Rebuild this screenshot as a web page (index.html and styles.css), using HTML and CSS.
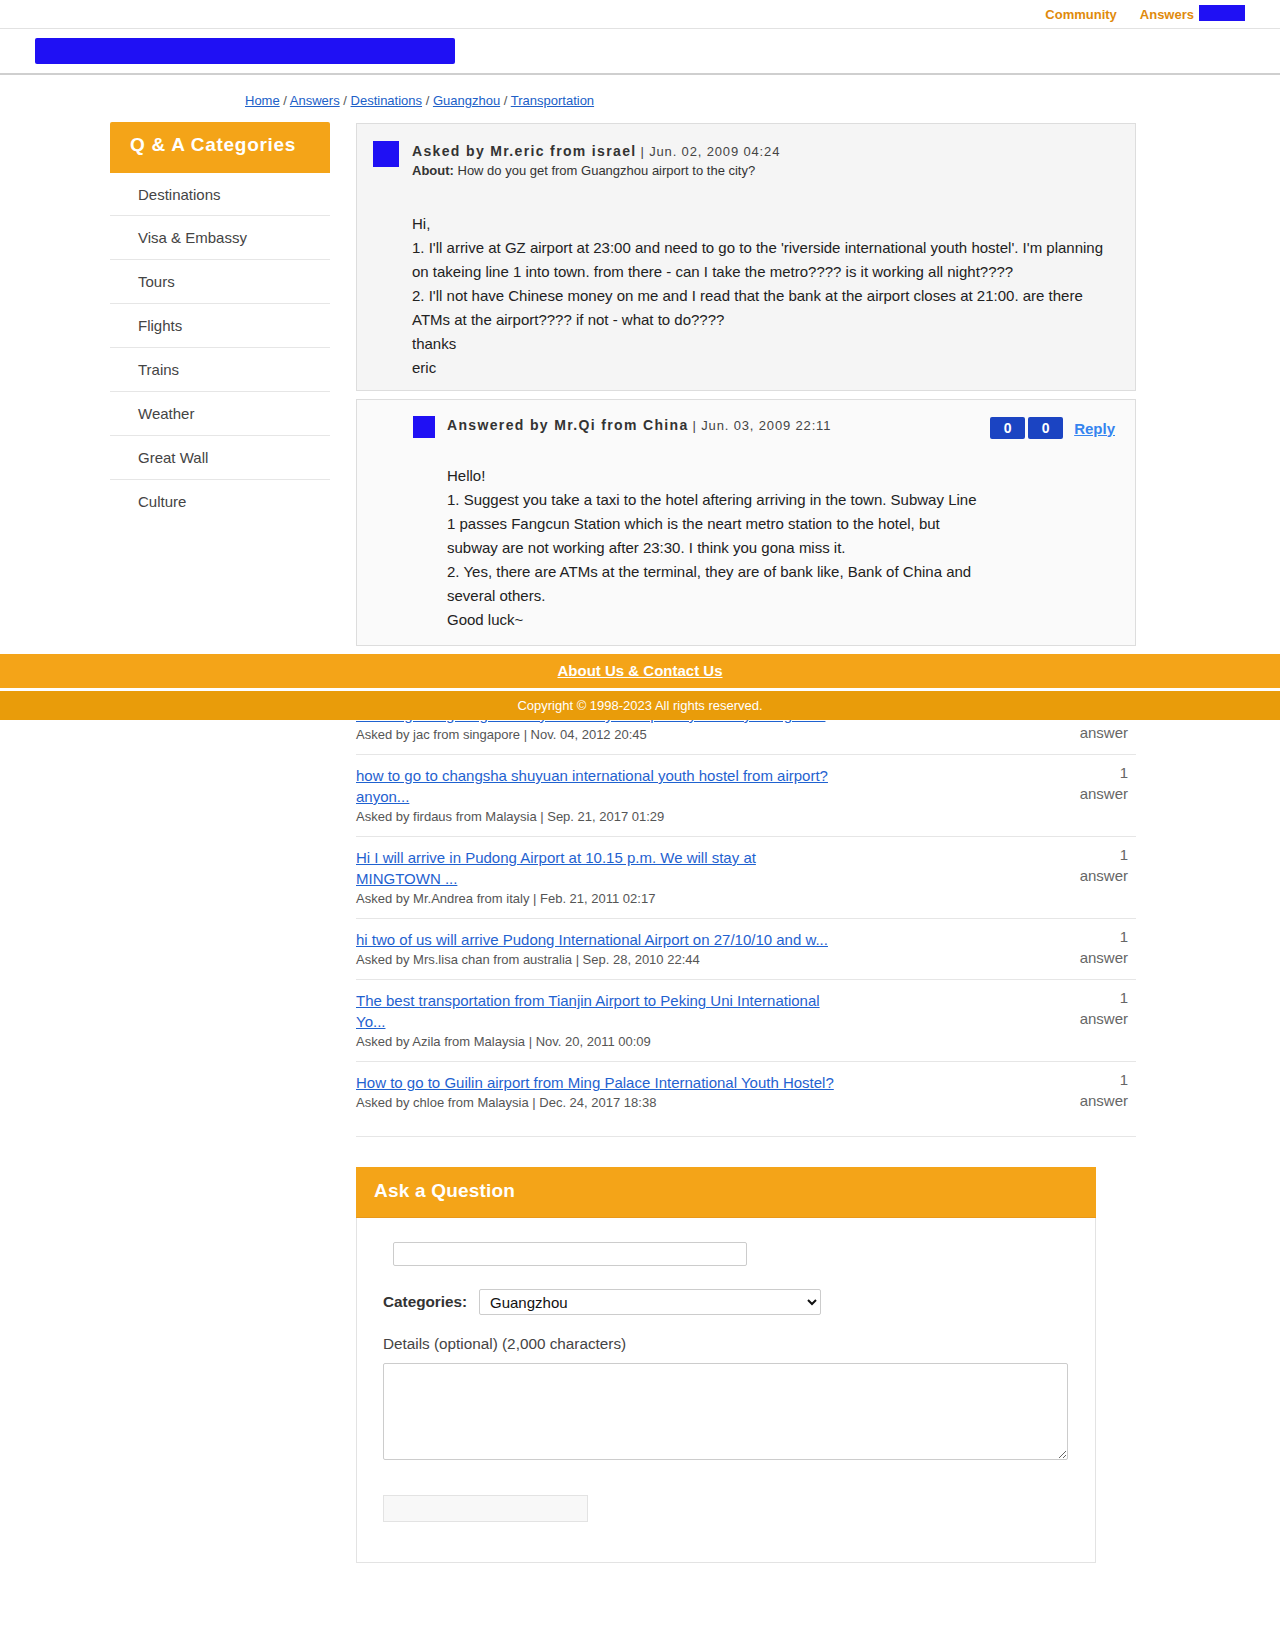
FILE: index.html
```html
<!DOCTYPE html>
<html lang="en">
<head>
<meta charset="utf-8">
<title>How do you get from Guangzhou airport to the city?</title>
<link rel="stylesheet" href="styles.css">
</head>
<body>
<div class="topbar">
  <a class="top-link" href="#">Community</a>
  <a class="top-link answers" href="#">Answers</a>
  <span class="top-box"></span>
</div>
<div class="header">
  <div class="logo"></div>
</div>
<div class="breadcrumb">
  <a href="#">Home</a> / <a href="#">Answers</a> / <a href="#">Destinations</a> / <a href="#">Guangzhou</a> / <a href="#">Transportation</a>
</div>
<div class="main">
  <aside class="sidebar">
    <div class="side-title">Q &amp; A Categories</div>
    <ul class="side-list">
      <li>Destinations</li>
      <li>Visa &amp; Embassy</li>
      <li>Tours</li>
      <li>Flights</li>
      <li>Trains</li>
      <li>Weather</li>
      <li>Great Wall</li>
      <li class="last">Culture</li>
    </ul>
  </aside>
  <div class="content">
    <div class="question">
      <div class="avatar"></div>
      <div class="q-main">
        <div class="q-title"><b>Asked by Mr.eric from israel</b> <span class="date">| Jun. 02, 2009 04:24</span></div>
        <div class="q-about"><b>About:</b> How do you get from Guangzhou airport to the city?</div>
        <div class="q-body">Hi,<br>1. I'll arrive at GZ airport at 23:00 and need to go to the 'riverside international youth hostel'. I'm planning on takeing line 1 into town. from there - can I take the metro???? is it working all night????<br>2. I'll not have Chinese money on me and I read that the bank at the airport closes at 21:00. are there ATMs at the airport???? if not - what to do????<br>thanks<br>eric</div>
      </div>
    </div>
    <div class="answer">
      <div class="a-head">
        <div class="a-who">
          <div class="avatar small"></div>
          <div class="q-title"><b>Answered by Mr.Qi from China</b> <span class="date">| Jun. 03, 2009 22:11</span></div>
        </div>
        <div class="a-actions">
          <span class="vote">0</span>
          <span class="vote">0</span>
          <a class="reply" href="#">Reply</a>
        </div>
      </div>
      <div class="a-body">Hello!<br>1. Suggest you take a taxi to the hotel aftering arriving in the town. Subway Line 1 passes Fangcun Station which is the neart metro station to the hotel, but subway are not working after 23:30. I think you gona miss it.<br>2. Yes, there are ATMs at the terminal, they are of bank like, Bank of China and several others.<br>Good luck~</div>
    </div>

    <ul class="qlist">
      <li class="qitem">
        <div class="qi-main">
          <a href="#">how to get to guangzhou city from baiyun airport by subway at night?...</a>
          <div class="qi-meta">Asked by jac from singapore | Nov. 04, 2012 20:45</div>
        </div>
        <div class="qi-count">1<br>answer</div>
      </li>
      <li class="qitem">
        <div class="qi-main">
          <a href="#">how to go to changsha shuyuan international youth hostel from airport? anyon...</a>
          <div class="qi-meta">Asked by firdaus from Malaysia | Sep. 21, 2017 01:29</div>
        </div>
        <div class="qi-count">1<br>answer</div>
      </li>
      <li class="qitem">
        <div class="qi-main">
          <a href="#">Hi I will arrive in Pudong Airport at 10.15 p.m. We will stay at MINGTOWN ...</a>
          <div class="qi-meta">Asked by Mr.Andrea from italy | Feb. 21, 2011 02:17</div>
        </div>
        <div class="qi-count">1<br>answer</div>
      </li>
      <li class="qitem">
        <div class="qi-main">
          <a href="#">hi two of us will arrive Pudong International Airport on 27/10/10 and w...</a>
          <div class="qi-meta">Asked by Mrs.lisa chan from australia | Sep. 28, 2010 22:44</div>
        </div>
        <div class="qi-count">1<br>answer</div>
      </li>
      <li class="qitem">
        <div class="qi-main">
          <a href="#">The best transportation from Tianjin Airport to Peking Uni International Yo...</a>
          <div class="qi-meta">Asked by Azila from Malaysia | Nov. 20, 2011 00:09</div>
        </div>
        <div class="qi-count">1<br>answer</div>
      </li>
      <li class="qitem">
        <div class="qi-main">
          <a href="#">How to go to Guilin airport from Ming Palace International Youth Hostel?</a>
          <div class="qi-meta">Asked by chloe from Malaysia | Dec. 24, 2017 18:38</div>
        </div>
        <div class="qi-count">1<br>answer</div>
      </li>
    </ul>

    <div class="ask">
      <div class="ask-head">Ask a Question</div>
      <div class="ask-body">
        <input class="ask-input" type="text">
        <div class="cat-row">
          <label class="cat-label">Categories:</label>
          <select class="cat-select"><option>Guangzhou</option></select>
        </div>
        <div class="details-label">Details (optional) (2,000 characters)</div>
        <textarea class="details"></textarea>
        <div class="submit"></div>
      </div>
    </div>
  </div>
</div>

<div class="footer">
  <div class="footer-links"><a href="#">About Us &amp; Contact Us</a></div>
  <div class="copyright">Copyright © 1998-2023 All rights reserved.</div>
</div>
</body>
</html>
```

FILE: styles.css
```css
* { box-sizing: border-box; }
html, body { margin: 0; padding: 0; }
body {
  font-family: "Liberation Sans", Arial, Helvetica, sans-serif;
  color: #333;
  background: #fff;
  min-height: 1652px;
}

/* top bar */
.topbar {
  height: 29px;
  border-bottom: 1px solid #e2e2e2;
  display: flex;
  justify-content: flex-end;
  align-items: center;
  padding-right: 35px;
}
.top-link {
  font-size: 13px;
  font-weight: bold;
  color: #df8a0c;
  text-decoration: none;
  margin-right: 23px;
  line-height: 16px;
  padding-top: 1px;
}
.top-link.answers { margin-right: 5px; }
.top-box {
  width: 46px;
  height: 16px;
  background: #1f10f4;
  margin-top: -2px;
}

/* header */
.header {
  height: 46px;
  padding: 9px 0 0 35px;
  border-bottom: 2px solid #cfcfcf;
}
.logo {
  width: 420px;
  height: 26px;
  background: #1f10f4;
  border-radius: 2px;
}

/* breadcrumb */
.breadcrumb {
  padding-left: 245px;
  margin-top: 18px;
  font-size: 13px;
  line-height: 16px;
  color: #555;
}
.breadcrumb a { color: #2060c8; }

/* layout */
.main {
  display: flex;
  align-items: flex-start;
  margin: 13px 0 0 110px;
}
.sidebar { width: 220px; }
.side-title {
  height: 51px;
  background: #f4a418;
  color: #fff;
  font-size: 19px;
  font-weight: bold;
  letter-spacing: 0.7px;
  padding: 12px 0 0 20px;
  border-radius: 2px 2px 0 0;
}
.side-list {
  list-style: none;
  margin: 0;
  padding: 0;
}
.side-list li {
  height: 44px;
  line-height: 43px;
  padding-left: 28px;
  font-size: 15px;
  color: #444;
  border-bottom: 1px solid #e6e6e6;
}
.side-list li:first-child { height: 43px; line-height: 44px; }
.side-list li.last { border-bottom: none; }

.content {
  width: 780px;
  margin-left: 26px;
  margin-top: 1px;
}

/* question */
.question {
  display: flex;
  align-items: flex-start;
  gap: 13px;
  background: #f5f5f5;
  border: 1px solid #dddddd;
  padding: 17px 22px 10px 16px;
}
.avatar {
  width: 26px;
  height: 26px;
  background: #1f10f4;
  flex: none;
}
.avatar.small { width: 22px; height: 22px; }
.q-main { flex: 1; }
.q-title {
  font-size: 14px;
  line-height: 20px;
  color: #333;
}
.q-title b { letter-spacing: 1.35px; }
.q-title .date {
  font-size: 13px;
  letter-spacing: 0.85px;
  color: #444;
}
.q-about {
  font-size: 13px;
  line-height: 18px;
  color: #333;
}
.q-body {
  margin-top: 32px;
  width: 700px;
  font-size: 15px;
  line-height: 24px;
  color: #222;
}

/* answer */
.answer {
  margin-top: 8px;
  background: #fafafa;
  border: 1px solid #dddddd;
  padding: 15px 20px 13px 56px;
}
.a-head {
  display: flex;
  justify-content: space-between;
  align-items: center;
  height: 24px;
}
.a-who {
  display: flex;
  align-items: center;
  gap: 12px;
}
.a-who .q-title { margin-top: -4px; }
.a-actions {
  display: flex;
  align-items: center;
  gap: 3px;
  margin-top: 2px;
}
.vote {
  width: 35px;
  height: 22px;
  background: #1b44c2;
  color: #fff;
  font-weight: bold;
  font-size: 14px;
  line-height: 22px;
  text-align: center;
  border-radius: 2px;
}
.reply {
  margin-left: 8px;
  font-size: 15px;
  font-weight: bold;
  color: #3584ef;
}
.a-body {
  margin: 25px 0 0 34px;
  width: 540px;
  font-size: 15px;
  line-height: 24px;
  color: #222;
}

/* list */
.qlist {
  list-style: none;
  margin: 48px 0 0;
  padding: 0;
}
.qitem {
  display: flex;
  justify-content: space-between;
  border-bottom: 1px solid #e6e6e6;
  padding: 10px 0 9px;
}
.qitem:last-child { padding-bottom: 23px; }
.qi-main { width: 480px; }
.qi-main a {
  font-size: 15px;
  line-height: 21px;
  color: #1f62d0;
}
.qi-meta {
  font-size: 13px;
  line-height: 20px;
  color: #555;
}
.qi-count {
  font-size: 15px;
  line-height: 21px;
  color: #666;
  text-align: right;
  padding-right: 8px;
  margin-top: -3px;
}

/* ask box */
.ask {
  width: 740px;
  margin-top: 30px;
  border: 1px solid #e3e3e3;
}
.ask-head {
  height: 51px;
  margin: -1px -1px 0;
  background: #f4a418;
  color: #fff;
  font-size: 19px;
  font-weight: bold;
  letter-spacing: 0.2px;
  padding: 13px 0 0 18px;
  border-bottom: 1px solid #e8981a;
}
.ask-body {
  padding: 24px 0 40px 26px;
}
.ask-input {
  display: block;
  margin-left: 10px;
  width: 354px;
  height: 24px;
  border: 1px solid #cccccc;
  border-radius: 2px;
  background: #fff;
}
.cat-row {
  display: flex;
  align-items: center;
  gap: 11px;
  margin-top: 23px;
}
.cat-label {
  font-size: 15.3px;
  font-weight: bold;
  color: #333;
  width: 85px;
}
.cat-select {
  width: 342px;
  height: 26px;
  font-family: "Liberation Sans", Arial, sans-serif;
  font-size: 15px;
  color: #111;
  border: 1px solid #cccccc;
  border-radius: 2px;
  background: #fff;
  padding-left: 6px;
}
.details-label {
  margin-top: 20px;
  font-size: 15.3px;
  line-height: 18px;
  color: #444;
}
.details {
  display: block;
  margin-top: 10px;
  width: 685px;
  height: 97px;
  border: 1px solid #cccccc;
  border-radius: 2px;
  background: #fff;
}
.submit {
  margin-top: 35px;
  width: 205px;
  height: 27px;
  background: #f8f8f8;
  border: 1px solid #e3e3e3;
}

/* footer overlay */
.footer {
  position: absolute;
  top: 654px;
  left: 0;
  width: 100%;
  background: #fff;
}
.footer-links {
  height: 34px;
  line-height: 34px;
  background: #f4a418;
  text-align: center;
}
.footer-links a {
  color: #fff;
  font-size: 15px;
  font-weight: bold;
}
.copyright {
  margin-top: 3px;
  height: 29px;
  line-height: 29px;
  background: #e99c0a;
  color: #fff;
  font-size: 13px;
  text-align: center;
}
```
